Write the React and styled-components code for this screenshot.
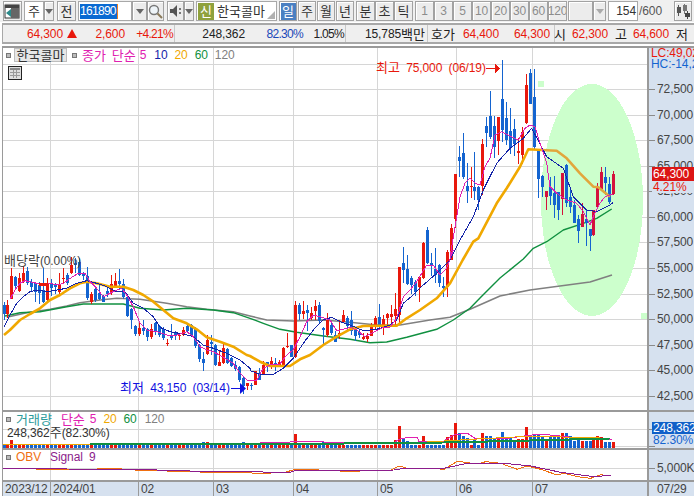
import React from 'react'
import styled, { createGlobalStyle } from 'styled-components'

const GlobalStyle = createGlobalStyle`
  html, body { margin: 0; padding: 0; background: #fff; }
  body {
    font-family: "Liberation Sans", "Noto Sans CJK KR", sans-serif;
    font-size: 12px;
    letter-spacing: -0.1px;
    word-spacing: 3px;
    color: #333;
  }
`

const RED = '#e8180c'
const RED_IN = '#d4123c'
const BLUE = '#1464d0'
const MAGENTA = '#e020b0'
const NAVY = '#1424a8'
const ORANGE = '#f0a800'
const GREEN = '#109040'
const GRAY = '#808080'
const GRID = '#d6d6d6'

const z6 = ([x, y]) => [x / 3, 240 + y / 3]
const z7 = ([x, y]) => [250 + x / 3, 240 + y / 3]
const z5 = ([x, y]) => [440 + x / 3, 60 + y / 3]
const z3 = ([x, y]) => [x / 3, 400 + y / 3]
const z4 = ([x, y]) => [344 + x / 3, 400 + y / 3]
const pts = (list) => list.map((p) => p.map((n) => n.toFixed(1)).join(',')).join(' ')

// x, top, bottom, high, low, colour, as read from the crops
const left = [
  [12,195,222,185,238,'b'],[22,195,222,180,235,'r'],[34,108,178,85,178,'r'],[46,112,138,108,145,'b'],
  [58,115,155,100,158,'r'],[70,98,125,78,130,'r'],[82,93,128,82,135,'b'],[94,125,140,118,155,'b'],
  [106,128,155,125,185,'b'],[118,135,160,125,190,'b'],[130,150,185,85,190,'b'],[142,128,178,115,190,'r'],
  [154,130,145,118,170,'b'],[166,135,142,128,160,'b'],[178,132,155,100,170,'r'],[190,114,117,85,130,'r'],
  [202,105,130,100,135,'b'],[214,75,98,50,100,'r'],[226,70,75,55,100,'b'],[238,65,105,55,110,'b'],
  [250,100,110,95,118,'b'],[262,108,175,80,178,'b'],[274,162,185,155,190,'r'],[286,148,180,140,185,'b'],
  [298,160,178,130,180,'b'],[310,168,185,165,187,'b'],[322,152,162,135,170,'b'],[334,132,155,105,165,'r'],
  [346,122,138,100,140,'r'],[358,122,130,88,150,'b'],[370,132,172,118,178,'b'],[382,170,228,165,232,'b'],
  [394,208,240,205,268,'b'],[406,258,282,255,288,'b'],[418,265,282,250,290,'r'],[430,265,275,240,285,'b'],
  [442,268,292,265,305,'b'],[454,267,292,252,298,'r'],[466,248,275,245,285,'b'],[478,258,285,255,290,'b'],
  [490,268,295,262,300,'b'],[502,309,312,298,320,'r'],[514,285,295,252,300,'b'],[526,280,290,272,300,'b'],
  [538,284,287,278,298,'r'],[550,270,285,262,290,'r'],[562,258,272,255,280,'b'],[574,255,285,252,290,'b'],
  [586,265,318,262,325,'b'],[598,315,358,312,365,'b'],[610,358,370,335,392,'b'],[620,300,342,285,345,'r'],
  [632,305,312,285,345,'b'],[644,315,375,312,378,'b'],[656,365,378,330,378,'r'],[668,325,370,312,372,'r'],
  [680,328,370,325,372,'b'],[692,355,378,352,382,'b'],[704,375,388,362,392,'b'],[716,380,420,378,425,'b'],
  [728,415,440,412,462,'b'],[740,430,440,430,452,'r'],[752,436,439,430,450,'b'],
].map(([x, t, b, h, l, c]) => ({ x: x / 3, t: 240 + t / 3, b: 240 + b / 3, h: 240 + h / 3, l: 240 + l / 3, c }))

const middle = [
  [14,392,435,392,435,'r'],[26,398,418,385,420,'b'],[38,375,405,362,405,'r'],[50,367,372,365,395,'b'],
  [62,362,378,350,385,'r'],[74,368,375,355,395,'b'],[86,365,378,360,378,'r'],[98,325,375,320,378,'r'],
  [110,319,322,278,322,'r'],[122,315,350,315,352,'b'],[134,195,350,183,355,'r'],[146,195,222,190,240,'b'],
  [158,213,222,182,235,'r'],[170,210,218,195,272,'b'],[182,218,232,200,240,'r'],[194,198,212,180,240,'r'],
  [206,195,243,185,248,'b'],[218,265,270,262,315,'b'],[230,240,285,220,292,'r'],[242,255,278,250,285,'b'],
  [254,285,305,272,305,'b'],[266,280,290,240,298,'r'],[278,225,245,210,245,'r'],[290,235,260,228,272,'b'],
  [302,240,272,212,285,'b'],[314,268,290,262,305,'b'],[326,275,285,268,295,'b'],[338,292,298,278,300,'r'],
  [350,288,298,278,305,'r'],[362,262,288,250,290,'r'],[374,235,262,228,270,'r'],[386,232,262,192,268,'b'],
  [398,238,258,225,285,'r'],[410,222,235,218,262,'r'],[422,222,230,195,258,'r'],[434,208,228,160,260,'r'],
  [446,82,225,82,250,'r'],[458,68,90,22,130,'b'],[470,88,132,45,135,'b'],[482,115,135,108,162,'b'],
  [494,125,155,120,168,'b'],[506,112,142,108,185,'r'],[518,10,115,5,115,'r'],[530,-30,68,-40,72,'b'],
  [542,68,75,40,110,'b'],[554,88,105,25,130,'b'],[566,75,130,72,142,'b'],[578,138,145,110,170,'b'],
  [590,35,140,30,170,'r'],
].map(([x, t, b, h, l, c]) => ({ x: 250 + x / 3, t: 240 + t / 3, b: 240 + b / 3, h: 240 + h / 3, l: 240 + l / 3, c }))

const right = [
  [28,505,600,492,600,'r'],[40,342,478,342,505,'r'],[52,292,305,258,350,'b'],[64,280,352,218,355,'b'],
  [76,378,392,310,430,'b'],[88,377,380,322,415,'r'],[100,382,395,275,420,'b'],[112,380,418,378,450,'b'],
  [124,252,378,238,405,'r'],[136,198,218,172,262,'b'],[148,168,232,92,235,'b'],[160,198,262,168,295,'b'],
  [172,170,242,170,285,'r'],[184,118,212,0,245,'b'],[196,175,240,125,255,'b'],[208,212,262,145,282,'b'],
  [220,208,252,178,290,'b'],[232,272,278,235,312,'r'],[244,215,285,200,310,'r'],[256,75,190,42,192,'r'],
  [268,38,132,28,132,'b'],[280,112,262,28,270,'b'],[292,270,358,268,415,'b'],[304,348,382,345,412,'b'],
  [316,392,410,392,450,'r'],[328,380,408,350,435,'b'],[340,400,435,348,475,'b'],[352,395,448,395,478,'b'],
  [364,340,418,340,465,'r'],[376,315,430,312,442,'b'],[388,412,442,388,460,'b'],[400,435,488,420,490,'b'],
  [412,478,515,465,548,'b'],[424,462,500,430,500,'r'],[436,478,490,450,558,'b'],[448,508,530,508,575,'b'],
  [460,450,525,450,528,'r'],[472,382,442,368,445,'r'],[484,335,385,322,392,'r'],[496,350,368,322,405,'b'],
  [508,372,425,350,432,'b'],[520,342,402,332,405,'r'],
].map(([x, t, b, h, l, c]) => ({ x: 446.7 + (x - 16) * 0.3306, t: 60 + t / 3, b: 60 + b / 3, h: 60 + h / 3, l: 60 + l / 3, c }))

const candles = [...left, ...middle, ...right]

const ma5 = [
  ...[[30,178],[45,150],[60,130],[75,122],[90,125],[110,130],[130,130],[150,130],[170,135],[190,130],[215,112],[235,100],[255,100],[270,125],[290,145],[310,170],[330,160],[350,150],[365,145],[380,165],[400,200],[420,250],[440,270],[470,275],[500,285],[530,285],[560,275],[580,290],[600,320],[620,330],[640,335],[670,352],[700,370],[720,400],[740,420]].map(z6),
  ...[[0,423],[20,420],[40,385],[60,375],[90,372],[110,345],[130,330],[150,290],[170,245],[190,225],[215,232],[240,240],[260,272],[280,268],[300,262],[320,270],[345,290],[365,280],[400,262],[420,262],[440,235],[460,170],[480,150],[500,125],[530,75],[550,75],[570,105],[590,85],[610,30]].map(z7),
  ...[[30,590],[45,500],[60,410],[75,370],[90,355],[105,370],[120,375],[135,320],[150,295],[165,225],[185,215],[210,228],[235,240],[255,205],[270,195],[285,200],[300,250],[320,310],[330,380],[350,400],[380,420],[410,430],[430,455],[450,495],[460,470],[480,430],[495,410],[518,402]].map(z5),
]
const ma10 = [
  ...[[12,260],[30,225],[50,190],[70,170],[90,155],[110,150],[140,155],[170,150],[200,145],[230,130],[260,122],[290,130],[320,140],[350,155],[375,155],[400,190],[430,205],[460,230],[480,262],[510,275],[550,282],[580,290],[610,315],[640,325],[680,340],[720,360],[750,385]].map(z6),
  ...[[0,392],[30,403],[70,403],[100,385],[130,355],[160,310],[190,270],[220,240],[245,232],[270,245],[300,255],[340,272],[380,268],[420,255],[440,240],[460,190],[490,165],[520,135],[560,100],[600,60]].map(z7),
  ...[[30,600],[60,540],[100,470],[130,390],[170,310],[210,265],[250,235],[275,205],[320,290],[370,325],[400,410],[440,450],[470,455],[510,435],[518,428]].map(z5),
]
const ma20a = [
  ...[[12,285],[30,270],[60,240],[90,222],[120,205],[150,180],[180,165],[210,145],[240,130],[260,125],[290,130],[330,140],[370,140],[400,150],[430,165],[460,185],[490,210],[520,235],[560,250],[590,268],[620,292],[660,305],[700,320],[740,345]].map(z6),
  ...[[0,348],[30,365],[60,378],[120,378],[150,358],[180,345],[220,315],[260,290],[300,268],[340,258],[400,257],[440,257],[470,235],[510,210],[560,175],[600,130],[630,75]].map(z7),
  ...[[68,600],[100,545],[115,535],[170,430],[200,385],[240,320],[265,268],[305,270]].map(z5),
]
const ma20b = [[305,270],[350,272],[380,295],[420,340],[460,380],[475,382],[510,410]].map(z5)
const ma60 = [
  ...[[15,228],[60,218],[120,215],[200,200],[250,192],[370,192],[420,205],[490,210],[560,205],[640,210],[700,218]].map(z6),
  ...[[0,235],[40,250],[90,268],[140,277],[220,288],[300,298],[360,308],[410,306],[470,292],[560,268],[610,240],[660,205]].map(z7),
  [480, 298], [500, 278],
  ...[[250,597],[280,565],[320,545],[370,510],[430,490],[470,475],[515,447]].map(z5),
]
const ma120 = [
  ...[[20,232],[80,218],[150,208],[200,198],[240,188],[300,180],[350,175],[420,178],[500,190],[560,200],[620,208],[700,215]].map(z6),
  ...[[0,228],[50,240],[130,243],[220,240],[300,247],[380,255],[450,255],[540,240],[600,232],[660,208]].map(z7),
  [500, 296], [530, 290], [560, 286], [590, 282], [612, 275],
]

const priceLines = [64, 89, 115, 140, 166, 191, 217, 242, 268, 294, 319, 345, 370, 396]
const monthLines = [50, 138, 213, 293, 377, 456, 532]
const priceTicks = [
  ['72,500', 89], ['70,000', 115], ['67,500', 140], ['65,000', 166], ['62,500', 191], ['60,000', 217], ['57,500', 242],
  ['55,000', 268], ['52,500', 294], ['50,000', 319], ['47,500', 345], ['45,000', 370], ['42,500', 396],
]

const volSpikes = [
  [11, 440], [192, 443], [197, 443], [205, 442], [242, 442], [287, 442], [295, 434], [322, 442],
  ...[[150,120],[160,78],[172,118],[184,122],[232,108],[304,112],[316,105],[328,70],[340,100],[352,108],[364,115],[388,118],[412,100],[424,108],[436,108],[448,118],[460,115],[472,96],[484,114],[496,113],[508,120],[520,118],[532,118],[544,82],[556,112],[568,102],[580,102],[592,108],[604,118],[616,112],[628,105],[640,112],[652,100],[664,100],[676,108],[688,122],[700,112],[712,124],[724,122],[736,124],[748,115],[760,108],[772,112],[784,125],[796,125],[808,125]].map(([x, y]) => [344 + x / 3, 400 + y / 3]),
]
const volBars = candles.map((k) => {
  const hit = volSpikes.find(([x]) => Math.abs(x - k.x) < 2)
  return { x: k.x, top: hit ? hit[1] : 444.5, c: k.c }
})
const volOrange = [[0, 444.5], [420, 443], [427, 442], [477, 439], [524, 436.5], [600, 437.5]]
const volGreen = [[90, 443.5], [162, 443.5], [344, 443.5], [444, 442.5], [510, 441], [610, 438.5]]
const volMagenta = [[200,443],[260,443],[290,442],[296,441],[313,441],[330,442.5],[394,442.5],[400,439],[410,437],[417,437],[419,441.5],[443,441.5],[454,435],[467,433],[476,439],[510,438],[524,436],[540,434],[560,436],[577,438],[612,439.5]]

const obvOrange = [
  ...[[10,205],[60,205],[130,208],[170,208],[270,208],[340,205],[430,212],[470,212],[600,216],[640,216],[700,217],[780,220],[850,218],[880,210],[910,208],[1040,214]].map(z3),
  ...[[90,212],[140,210],[165,198],[190,205],[260,205],[300,208],[340,184],[400,192],[425,185],[470,190],[520,208],[550,198],[590,208],[640,225],[660,220],[700,230],[740,235],[770,224],[795,228]].map(z4),
]
const obvSignal = [
  ...[[10,207],[120,205],[200,207],[350,208],[470,210],[600,214],[700,215],[870,217],[885,212],[1040,212]].map(z3),
  ...[[150,210],[180,205],[300,205],[360,192],[480,190],[560,198],[650,217],[750,230],[800,226]].map(z4),
]

const Page = styled.div`
  width: 694px;
  height: 496px;
  overflow: hidden;
  background: #fff;
  display: flex;
  flex-direction: column;
`
const Toolbar = styled.div`
  height: 22px;
  flex: none;
  padding: 0 0 0 3px;
  display: flex;
  align-items: center;
  background: #f0f0f0;
`
const Btn = styled.div`
  width: ${(p) => p.$w}px;
  height: 20px;
  margin-left: ${(p) => p.$ml || 0}px;
  flex: none;
  box-sizing: border-box;
  display: flex;
  align-items: center;
  justify-content: center;
  border: 1px solid #a2a2a2;
  box-shadow: inset 1px 1px 0 #fff;
  background: ${(p) => (p.$active ? '#4a80c2' : '#ececec')};
  color: ${(p) => (p.$active ? '#fff' : p.$off ? '#8c8c8c' : '#333')};
  font-size: 12px;
  overflow: hidden;
`
const Field = styled.div`
  width: ${(p) => p.$w}px;
  height: 20px;
  margin-left: ${(p) => p.$ml || 0}px;
  flex: none;
  box-sizing: border-box;
  display: flex;
  align-items: center;
  justify-content: ${(p) => p.$justify || 'flex-start'};
  padding: 0 1px;
  background: #fff;
  border: 1px solid #a8a8a8;
`
const Selected = styled.span`
  width: 37px;
  background: #0a6ad2;
  color: #fff;
  padding: 1px 0;
  border-right: 1px solid #f08020;
  line-height: 13px;
  letter-spacing: -0.7px;
`
const NewTag = styled.span`
  width: 16px;
  height: 17px;
  margin-right: 3px;
  display: flex;
  align-items: center;
  justify-content: center;
  background: #8fa13c;
  color: #fff;
`
const Ko = styled.span`
  font-family: "Noto Sans CJK KR", sans-serif;
  font-size: 13px;
  line-height: 14px;
  letter-spacing: 0;
  color: ${(p) => p.$color || 'inherit'};
  margin-left: ${(p) => p.$ml || 0}px;
`
const Arrow = styled.span`
  width: 0;
  height: 0;
  border-left: 4px solid transparent;
  border-right: 4px solid transparent;
  border-top: 5px solid ${(p) => p.$color || '#666'};
`
const Corner = styled.span`
  margin-left: auto;
  align-self: flex-end;
  margin-bottom: 1px;
  width: 0;
  height: 0;
  border-left: 8px solid transparent;
  border-bottom: 8px solid #b0b0b0;
`
const PageCount = styled.span`
  margin-left: 1px;
  width: 26px;
  color: #555;
  flex: none;
`
const StatusBar = styled.div`
  height: 17px;
  flex: none;
  margin: 1px 0 2px 2px;
  display: flex;
  align-items: center;
  background: #efefef;
  border: 2px solid #a8a8a8;
  border-right: none;
  border-left-width: 1px;
`
const Cell = styled.div`
  width: ${(p) => p.$w}px;
  flex: none;
  display: flex;
  height: 100%;
  align-items: center;
  border-right: ${(p) => (p.$last ? 'none' : '1px solid #c8c8c8')};
  box-sizing: border-box;
`
const Val = styled.span`
  width: ${(p) => p.$w}px;
  flex: none;
  display: flex;
  justify-content: flex-end;
  align-items: center;
  color: ${(p) => p.$color || '#222'};
  letter-spacing: ${(p) => (p.$tight ? '-0.7px' : 'inherit')};
  white-space: nowrap;
`
const Tri = styled.span`
  width: 0;
  height: 0;
  margin-left: 4px;
  border-left: 5px solid transparent;
  border-right: 5px solid transparent;
  border-bottom: 9px solid ${RED};
`
const Chart = styled.div`
  margin-left: 2px;
  flex: 1;
  min-height: 0;
  display: flex;
  flex-direction: column;
  border-left: 1px solid #9a9a9a;
  border-top: 2px solid #9a9a9a;
`
const Pane = styled.div`
  height: ${(p) => p.$h}px;
  flex: none;
  box-sizing: border-box;
  display: flex;
  border-bottom: 2px solid #9a9a9a;
`
const Plot = styled.div`
  position: relative;
  width: 644px;
  flex: none;
  background: #fff;
  overflow: hidden;
  svg { display: block; }
`
const Axis = styled.div`
  position: relative;
  flex: 1;
  background: #d6e1ef;
  border-left: 2px solid #9a9a9a;
  overflow: hidden;
`
const Tick = styled.span.attrs((p) => ({ style: { top: p.$y } }))`
  position: absolute;
  left: 0;
  display: flex;
  align-items: center;
  height: 12px;
  margin-top: -6px;
  color: #444;
  white-space: nowrap;
  &::before {
    content: '';
    width: 6px;
    height: 1px;
    margin-right: 2px;
    background: #8a8a8a;
  }
`
const AxisNote = styled.span.attrs((p) => ({ style: { top: p.$y } }))`
  position: absolute;
  left: 2px;
  color: ${(p) => p.$color};
  white-space: nowrap;
  line-height: 11px;
`
const PriceTag = styled.span.attrs((p) => ({ style: { top: p.$y } }))`
  position: absolute;
  left: 3px;
  right: 0;
  height: ${(p) => p.$h || 14}px;
  padding-left: 1px;
  display: flex;
  align-items: center;
  background: ${(p) => p.$bg};
  color: ${(p) => p.$color || '#fff'};
  white-space: nowrap;
`
const Legend = styled.div`
  position: absolute;
  top: ${(p) => p.$top}px;
  left: ${(p) => p.$left}px;
  height: 14px;
  line-height: 14px;
  display: flex;
  align-items: center;
  white-space: nowrap;
`
const Handle = styled.span`
  width: 3px;
  height: 3px;
  border: 1px solid #777;
  background: #bbb;
  margin-right: ${(p) => p.$mr || 3}px;
  margin-left: ${(p) => p.$ml || 0}px;
`
const NameChip = styled.span`
  width: 53px;
  height: 14px;
  box-sizing: border-box;
  display: flex;
  align-items: center;
  justify-content: center;
  background: #e6e6e6;
  border: 1px solid #bdbdbd;
`
const Item = styled.span`
  color: ${(p) => p.$color};
  margin-left: ${(p) => p.$ml || 0}px;
`
const GridButton = styled.span`
  position: absolute;
  top: 18px;
  left: 5px;
  display: flex;
`
const Note = styled.span`
  position: absolute;
  top: ${(p) => p.$top}px;
  left: ${(p) => p.$left}px;
  color: ${(p) => p.$color};
  white-space: nowrap;
  line-height: 14px;
`
const DateRow = styled.div`
  flex: 1;
  min-height: 0;
  display: flex;
  background: #d6e1ef;
`
const DatePlot = styled.div`
  width: 644px;
  flex: none;
  display: grid;
  grid-template-columns: 47px 88px 75px 80px 84px 79px 76px 1fr;
`
const DateCell = styled.span`
  padding-left: 2px;
  height: 14px;
  line-height: 14px;
  color: #444;
  border-left: ${(p) => (p.$first ? 'none' : '1px solid #9a9a9a')};
  white-space: nowrap;
`
const DateEnd = styled.span`
  flex: 1;
  padding-left: 8px;
  line-height: 14px;
  color: #444;
  border-left: 2px solid #9a9a9a;
`

const Candles = () => (
  <g shapeRendering="crispEdges">
    {candles.map((k, i) => {
      const x = Math.round(k.x)
      const colour = k.c === 'r' ? (k.x > 542 ? RED_IN : RED) : BLUE
      return (
        <g key={i} fill={colour}>
          <rect x={x} y={Math.round(k.h)} width={1} height={Math.max(Math.round(k.l - k.h), 1)} />
          <rect x={x - 1} y={Math.round(k.t)} width={3} height={Math.max(Math.round(k.b - k.t), 1)} />
        </g>
      )
    })}
  </g>
)

const Grid = ({ rows, top, bottom }) => (
  <g stroke={GRID} strokeWidth="1" shapeRendering="crispEdges">
    {rows.map((y) => <line key={y} x1="3" x2="648" y1={y + 0.5} y2={y + 0.5} />)}
    {monthLines.map((x) => <line key={x} x1={x + 0.5} x2={x + 0.5} y1={top} y2={bottom} />)}
  </g>
)

const Line = ({ points, colour, width = 1, smooth }) => (
  <polyline
    points={pts(points)}
    fill="none"
    stroke={colour}
    strokeWidth={width}
    strokeLinejoin="round"
    shapeRendering={smooth ? 'auto' : 'crispEdges'}
  />
)

const MainPlot = () => (
  <svg width="644" height="362" viewBox="3 48 644 362">
    <Grid rows={priceLines} top={48} bottom={410} />
    <ellipse cx="592" cy="200" rx="51" ry="116" fill="#ccffcc" shapeRendering="crispEdges" />
    <rect x="538" y="81" width="6" height="6" fill="#ccffcc" />
    <rect x="641" y="313" width="6" height="6" fill="#ccffcc" />
    <Line points={ma120} colour={GRAY} width={1.6} smooth />
    <Line points={ma60} colour={GREEN} width={1.4} smooth />
    <Candles />
    <Line points={ma20a} colour={ORANGE} width={2.6} smooth />
    <Line points={ma20b} colour="#e2a63c" width={2.6} smooth />
    <Line points={ma10} colour={NAVY} width={1} />
    <Line points={ma5} colour={MAGENTA} width={1} />
    <g fill={RED} shapeRendering="crispEdges">
      <rect x="486" y="68" width="9" height="1" />
      <polygon points="495,63 500,68.5 495,74" />
      <rect x="39" y="283" width="9" height="3" />
    </g>
    <g fill="#1010e0">
      <rect x="231" y="388" width="9" height="1" />
      <polygon points="240,383 246,388.5 240,394" />
    </g>
  </svg>
)

const VolPlot = () => (
  <svg width="644" height="36" viewBox="3 412 644 36">
    <Grid rows={[429, 446]} top={412} bottom={448} />
    <g shapeRendering="crispEdges">
      {volBars.map((b, i) => (
        <rect key={i} x={Math.round(b.x) - 1} y={Math.round(b.top)} width={3} height={448 - Math.round(b.top)} fill={b.c === 'r' ? RED : BLUE} />
      ))}
    </g>
    <Line points={volMagenta} colour={MAGENTA} />
    <Line points={volOrange} colour={ORANGE} width={1} />
    <Line points={volGreen} colour={GREEN} width={2} />
  </svg>
)

const ObvPlot = () => (
  <svg width="644" height="30" viewBox="3 450 644 30">
    <Grid rows={[468]} top={450} bottom={480} />
    <Line points={obvOrange} colour="#f07010" />
    <Line points={obvSignal} colour="#8c1c8c" width={1} />
  </svg>
)

const BarsIcon = () => (
  <svg width="17" height="17" viewBox="0 0 17 17">
    <rect x="1" y="2" width="14" height="13" fill="#fff" stroke="#333" />
    <rect x="1" y="2" width="14" height="3" fill="#444" />
    <rect x="7" y="5" width="8" height="10" fill="#666" />
    <polygon points="7,6 2,10 7,14" fill="#2a8a8a" />
  </svg>
)
const SearchIcon = () => (
  <svg width="15" height="15" viewBox="0 0 15 15">
    <circle cx="6" cy="6" r="4.5" fill="#eef4f8" stroke="#777" strokeWidth="1.4" />
    <line x1="9.5" y1="9.5" x2="14" y2="14" stroke="#8a7a5a" strokeWidth="2" />
  </svg>
)
const SpeakerIcon = () => (
  <svg width="14" height="14" viewBox="0 0 14 14">
    <polygon points="1,5 4,5 8,1 8,13 4,9 1,9" fill="#555" />
    <rect x="10" y="4" width="2" height="2" fill="#777" />
    <rect x="10" y="8" width="2" height="2" fill="#777" />
  </svg>
)
const CandleIcon = () => (
  <svg width="15" height="15" viewBox="0 0 15 15" shapeRendering="crispEdges">
    <rect x="1" y="3" width="4" height="6" fill="#555" />
    <rect x="2" y="1" width="1" height="11" fill="#555" />
    <rect x="7" y="1" width="4" height="6" fill="#777" />
    <rect x="8" y="0" width="1" height="10" fill="#777" />
    <rect x="9" y="9" width="5" height="4" fill="#444" />
    <rect x="11" y="7" width="1" height="8" fill="#444" />
  </svg>
)
const TableIcon = () => (
  <svg width="14" height="14" viewBox="0 0 14 14" shapeRendering="crispEdges">
    <rect x="0.5" y="0.5" width="13" height="13" fill="#ddd" stroke="#222" />
    <rect x="2" y="2" width="10" height="2" fill="#888" />
    <path d="M2 6.5H12M2 9.5H12M5.5 4V12M8.5 4V12" stroke="#999" />
  </svg>
)

const periods = ['1', '3', '5', '10', '20', '30', '60', '120']
const units = ['주', '월', '년']
const small = ['분', '초', '틱']

export default function App() {
  return (
    <Page>
      <GlobalStyle />
      <Toolbar>
        <Btn $w={19}><BarsIcon /></Btn>
        <Field $w={20} $ml={2} $justify="center"><Ko>주</Ko></Field>
        <Btn $w={10}><Arrow /></Btn>
        <Btn $w={19} $ml={3}><Ko>전</Ko></Btn>
        <Field $w={54} $ml={2}><Selected>161890</Selected></Field>
        <Btn $w={15}><Arrow /></Btn>
        <Btn $w={17}><SearchIcon /></Btn>
        <Btn $w={17} $ml={3}><SpeakerIcon /></Btn>
        <Btn $w={10}><Arrow /></Btn>
        <Field $w={81} $ml={2}><NewTag><Ko>신</Ko></NewTag><Ko>한국콜마</Ko><Corner /></Field>
        <Btn $w={18} $ml={2} $active><Ko>일</Ko></Btn>
        {units.map((u) => <Btn key={u} $w={18} $ml={1}><Ko>{u}</Ko></Btn>)}
        <Btn $w={19} $ml={2}><Ko>{small[0]}</Ko></Btn>
        <Btn $w={19}><Ko>{small[1]}</Ko></Btn>
        <Btn $w={19}><Ko>{small[2]}</Ko></Btn>
        <Btn $w={19} $ml={2} $off>{periods[0]}</Btn>
        {periods.slice(1).map((p) => <Btn key={p} $w={19} $off>{p}</Btn>)}
        <Btn $w={25} $ml={1} />
        <Btn $w={13} $off><Arrow $color="#aaa" /></Btn>
        <Field $w={30} $ml={2} $justify="flex-end">154</Field>
        <PageCount>/600</PageCount>
        <Btn $w={18} $ml={9}><CandleIcon /></Btn>
      </Toolbar>
      <StatusBar>
        <Cell $w={172}>
          <Val $w={74} $color={RED}>64,300<Tri /></Val>
          <Val $w={48} $color={RED}>2,600</Val>
          <Val $w={48} $color={RED} $tight>+4.21%</Val>
        </Cell>
        <Cell $w={171}>
          <Val $w={70}>248,362</Val>
          <Val $w={58} $color="#1a48b8" $tight>82.30%</Val>
          <Val $w={41} $tight>1.05%</Val>
        </Cell>
        <Cell $w={82}>
          <Val $w={79}>15,785<Ko>백만</Ko></Val>
        </Cell>
        <Cell $w={127}>
          <Val $w={27}><Ko>호가</Ko></Val>
          <Val $w={44} $color={RED}>64,400</Val>
          <Val $w={51} $color={RED}>64,300</Val>
        </Cell>
        <Cell $w={139} $last>
          <Val $w={11}><Ko>시</Ko></Val>
          <Val $w={42} $color={RED}>62,300</Val>
          <Val $w={19}><Ko>고</Ko></Val>
          <Val $w={42} $color={RED}>64,600</Val>
          <Val $w={19}><Ko>저</Ko></Val>
        </Cell>
      </StatusBar>
      <Chart>
        <Pane $h={364}>
          <Plot>
            <MainPlot />
            <Legend $top={0} $left={3}>
              <Handle />
              <NameChip><Ko>한국콜마</Ko></NameChip>
              <Handle $ml={5} $mr={5} />
              <Ko $color={MAGENTA}>종가 단순</Ko>
              <Item $color={MAGENTA} $ml={4}>5</Item>
              <Item $color={NAVY} $ml={8}>10</Item>
              <Item $color={ORANGE} $ml={7}>20</Item>
              <Item $color={GREEN} $ml={7}>60</Item>
              <Item $color={GRAY} $ml={7}>120</Item>
            </Legend>
            <GridButton><TableIcon /></GridButton>
            <Note $top={12} $left={373} $color={RED}><Ko>최고</Ko> 75,000 (06/19)</Note>
            <Note $top={332} $left={117} $color="#1010e0"><Ko>최저</Ko> 43,150 (03/14)</Note>
            <Note $top={205} $left={1} $color="#444"><Ko>배당락</Ko>(0.00%)</Note>
          </Plot>
          <Axis>
            {priceTicks.map(([label, y]) => <Tick key={label} $y={y - 48}>{label}</Tick>)}
            <AxisNote $y={0} $color={RED}>LC:49,02</AxisNote>
            <AxisNote $y={11} $color={BLUE}>HC:-14,2</AxisNote>
            <PriceTag $y={119} $bg="#dc1414">64,300</PriceTag>
            <PriceTag $y={133} $h={12} $bg="#d6e1ef" $color={RED}>4.21%</PriceTag>
          </Axis>
        </Pane>
        <Pane $h={38}>
          <Plot>
            <VolPlot />
            <Legend $top={0} $left={3}>
              <Handle $mr={5} />
              <Ko $color="#2a9a9a">거래량</Ko>
              <Ko $color={MAGENTA} $ml={9}>단순</Ko>
              <Item $color={MAGENTA} $ml={5}>5</Item>
              <Item $color={ORANGE} $ml={7}>20</Item>
              <Item $color={GREEN} $ml={7}>60</Item>
              <Item $color={GRAY} $ml={8}>120</Item>
            </Legend>
            <Note $top={13} $left={4} $color="#333">248,362<Ko>주</Ko>(82.30%)</Note>
          </Plot>
          <Axis>
            <Tick $y={17} />
            <Tick $y={34} />
            <PriceTag $y={10} $h={12} $bg="#1060c8">248,362</PriceTag>
            <PriceTag $y={22} $h={11} $bg="#d6e1ef" $color={BLUE}>82.30%</PriceTag>
          </Axis>
        </Pane>
        <Pane $h={32}>
          <Plot>
            <ObvPlot />
            <Legend $top={0} $left={3}>
              <Handle $mr={5} />
              <Item $color="#f07010">OBV</Item>
              <Item $color="#8c1c8c" $ml={9}>Signal 9</Item>
            </Legend>
          </Plot>
          <Axis>
            <Tick $y={18}>5,000K</Tick>
          </Axis>
        </Pane>
        <DateRow>
          <DatePlot>
            <DateCell $first>2023/12</DateCell>
            <DateCell>2024/01</DateCell>
            <DateCell>02</DateCell>
            <DateCell>03</DateCell>
            <DateCell>04</DateCell>
            <DateCell>05</DateCell>
            <DateCell>06</DateCell>
            <DateCell>07</DateCell>
          </DatePlot>
          <DateEnd>07/29</DateEnd>
        </DateRow>
      </Chart>
    </Page>
  )
}
